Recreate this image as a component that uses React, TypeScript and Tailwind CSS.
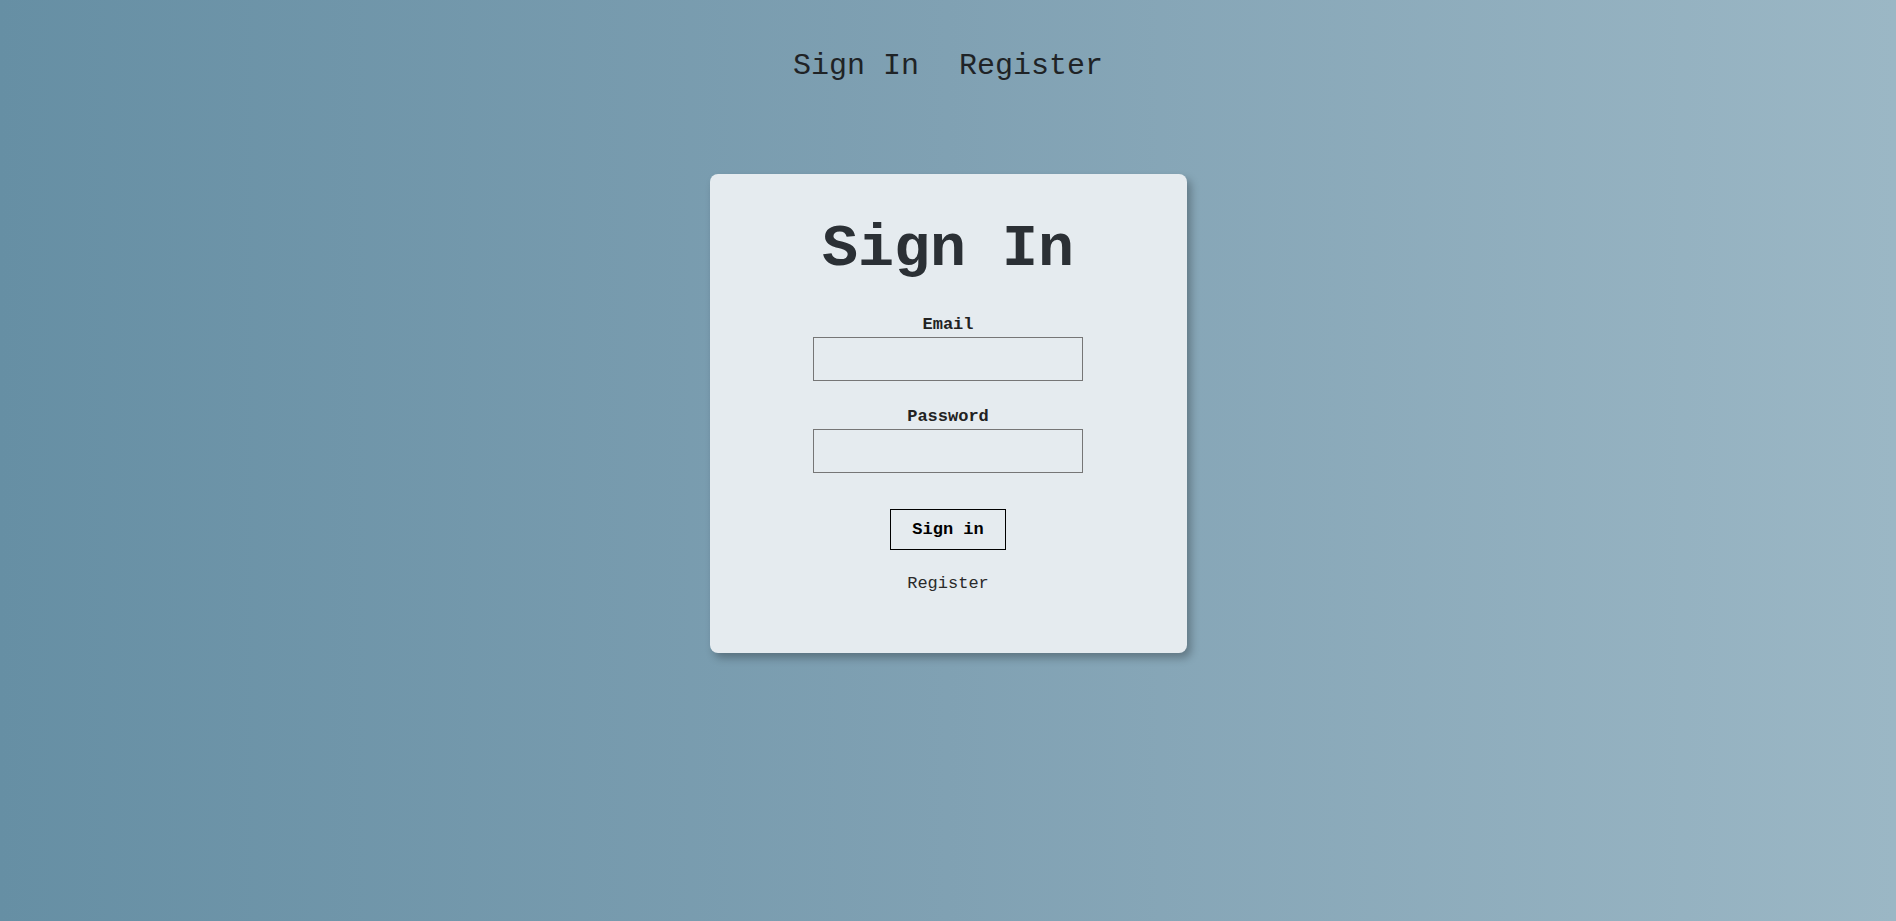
export default function App() {
  return (
    <div
      className="min-h-screen w-full bg-gradient-to-r from-[#668fa4] via-[#80a1b3] to-[#9bb7c5] text-[#1f1f1f]"
      style={{ fontFamily: '"Liberation Mono", "Courier New", monospace' }}
    >
      {/* Top nav */}
      <nav className="flex justify-center gap-[40px] pt-[51px] text-[30px] leading-none">
        <a href="#" className="text-[#1f2326]">Sign In</a>
        <a href="#" className="text-[#1f2326]">Register</a>
      </nav>

      {/* Card */}
      <div className="flex justify-center mt-[93px]">
        <form
          className="w-[477px] rounded-lg bg-[#e5ebef] shadow-[4px_5px_8px_rgba(0,0,0,0.28)] flex flex-col items-center pt-[45px] pb-[61px]"
          onSubmit={e => e.preventDefault()}
        >
          <h1 className="text-[60px] leading-none font-bold text-[#2b3035]">Sign In</h1>

          <label htmlFor="email" className="mt-[37px] mb-[4px] text-[17px] leading-none font-bold text-[#222]">
            Email
          </label>
          <input
            id="email"
            type="email"
            className="w-[270px] h-[44px] border border-[#767676] bg-transparent px-2 outline-none"
          />

          <label htmlFor="password" className="mt-[27px] mb-[4px] text-[17px] leading-none font-bold text-[#222]">
            Password
          </label>
          <input
            id="password"
            type="password"
            className="w-[270px] h-[44px] border border-[#767676] bg-transparent px-2 outline-none"
          />

          <button
            type="submit"
            className="mt-[36px] w-[116px] h-[41px] border border-black text-[17px] leading-none font-bold text-black"
          >
            Sign in
          </button>

          <a href="#" className="mt-[25px] text-[17px] leading-none text-[#2a2a2a]">
            Register
          </a>
        </form>
      </div>
    </div>
  )
}
